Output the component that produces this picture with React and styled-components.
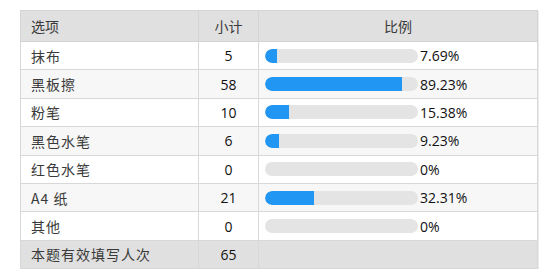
import React from 'react';
import styled, { createGlobalStyle } from 'styled-components';

const GlobalStyle = createGlobalStyle`
  body {
    margin: 0;
    background: #fff;
    font-family: "Open Sans", "Noto Sans CJK SC", sans-serif;
  }
`;

const Page = styled.div`
  padding: 10px 0 0 20px;
`;

const Table = styled.table`
  width: 518px;
  border-collapse: collapse;
  border: 1px solid #d8d8d8;
  box-shadow: 1px 1px 0 #ececec;
  font-size: 14px;
  color: #333;
`;

const HeadCell = styled.th`
  height: 30px;
  padding: 0 10px;
  background: #e0e0e0;
  border: 1px solid #d4d4d4;
  font-weight: normal;
  text-align: ${props => (props.left ? 'left' : 'center')};
  width: ${props => props.w || 'auto'};
  font-family: "Noto Sans CJK SC", sans-serif;
  color: #3a3a3a;
`;

const Row = styled.tr`
  background: ${props => (props.summary ? '#e0e0e0' : props.odd ? '#f7f7f7' : '#fff')};
`;

const Cell = styled.td`
  height: 27.4px;
  padding: 0 10px;
  border: 1px solid #d8d8d8;
  text-align: ${props => (props.center ? 'center' : 'left')};
  color: ${props => (props.num ? '#111' : '#3a3a3a')};
`;

const Label = styled.span`
  font-family: "Noto Sans CJK SC", sans-serif;
  letter-spacing: 1px;
`;

const BarCell = styled.td`
  padding: 0 0 0 6px;
  border: 1px solid #d8d8d8;
`;

const BarWrap = styled.div`
  display: flex;
  align-items: center;
  gap: 2px;
`;

const Track = styled.div`
  width: 153px;
  height: 14px;
  border-radius: 7px;
  background: #e4e4e4;
  overflow: hidden;
`;

const Fill = styled.div`
  height: 100%;
  background: #2196f3;
  border-radius: 7px 0 0 7px;
`;

const Percent = styled.span`
  color: #111;
`;

const rows = [
  { name: '抹布', count: 5, pct: '7.69%' },
  { name: '黑板擦', count: 58, pct: '89.23%' },
  { name: '粉笔', count: 10, pct: '15.38%' },
  { name: '黑色水笔', count: 6, pct: '9.23%' },
  { name: '红色水笔', count: 0, pct: '0%' },
  { name: 'A4 纸', count: 21, pct: '32.31%' },
  { name: '其他', count: 0, pct: '0%' },
];

const App = () => (
  <Page>
    <GlobalStyle />
    <Table>
      <thead>
        <tr>
          <HeadCell left w="157px">选项</HeadCell>
          <HeadCell w="39px">小计</HeadCell>
          <HeadCell>比例</HeadCell>
        </tr>
      </thead>
      <tbody>
        {rows.map((r, i) => (
          <Row key={r.name} odd={i % 2 === 1}>
            <Cell><Label>{r.name}</Label></Cell>
            <Cell center num>{r.count}</Cell>
            <BarCell>
              <BarWrap>
                <Track>
                  <Fill style={{ width: r.pct }} />
                </Track>
                <Percent>{r.pct}</Percent>
              </BarWrap>
            </BarCell>
          </Row>
        ))}
        <Row summary>
          <Cell><Label>本题有效填写人次</Label></Cell>
          <Cell center num>65</Cell>
          <Cell />
        </Row>
      </tbody>
    </Table>
  </Page>
);

export default App;
